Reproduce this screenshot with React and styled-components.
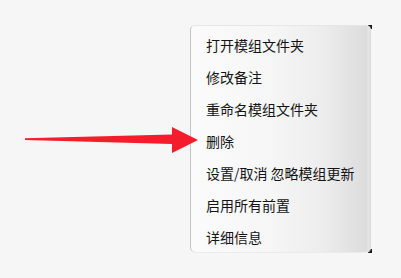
import React from "react";
import styled, { createGlobalStyle } from "styled-components";

const Global = createGlobalStyle`
  html, body { margin: 0; padding: 0; background: #f6f6f6; }
  body { width: 401px; height: 278px; overflow: hidden; }
`;

const Page = styled.div`
  position: relative;
  isolation: isolate;
  width: 401px;
  height: 278px;
  background: #f6f6f6;
  padding: 25px 0 0 190px;
  box-sizing: border-box;
  font-family: "Microsoft YaHei", "Noto Sans CJK SC", sans-serif;
`;

const Menu = styled.ul`
  position: relative;
  list-style: none;
  margin: 0;
  padding: 3px 0 0 0;
  width: 181px;
  height: 227px;
  box-sizing: border-box;
  border-radius: 5px;
  border-top: 1px solid #e6e6e6;
  border-left: 1px solid #c4c4c4;
  background:
    linear-gradient(to right, rgba(255,255,255,0) 0, rgba(255,255,255,0) calc(100% - 4px), rgba(255,255,255,0.35) calc(100% - 3px), rgba(255,255,255,0) 100%),
    linear-gradient(to right, #fbfbfb 0%, #f6f6f6 45%, #ececec 75%, #dadada 100%);
  box-shadow: 0 1px 0 #ececec;

  &::before, &::after {
    content: "";
    position: absolute;
    right: -1px;
    width: 4px;
    height: 4px;
    background: #1a1a1a;
    z-index: -1;
  }
  &::before { top: -1px; }
  &::after { bottom: -1px; }
`;

const Item = styled.li`
  height: 32px;
  display: flex;
  align-items: center;
  padding-left: 15px;
  font-size: 14px;
  color: #141414;
  white-space: nowrap;
  letter-spacing: 0;
`;

const Arrow = styled.svg`
  position: absolute;
  left: 0;
  top: 0;
  pointer-events: none;
`;

const items = [
  "打开模组文件夹",
  "修改备注",
  "重命名模组文件夹",
  "删除",
  "设置/取消 忽略模组更新",
  "启用所有前置",
  "详细信息",
];

export default function App() {
  return (
    <>
      <Global />
      <Page>
        <Menu>
          {items.map((t) => (
            <Item key={t}>{t}</Item>
          ))}
        </Menu>
        <Arrow width="401" height="278" viewBox="0 0 401 278">
          <polygon
            points="25,138.2 172,134.5 172,127 198,140 172,153 172,144 25,140"
            fill="#f31d2b"
          />
        </Arrow>
      </Page>
    </>
  );
}
